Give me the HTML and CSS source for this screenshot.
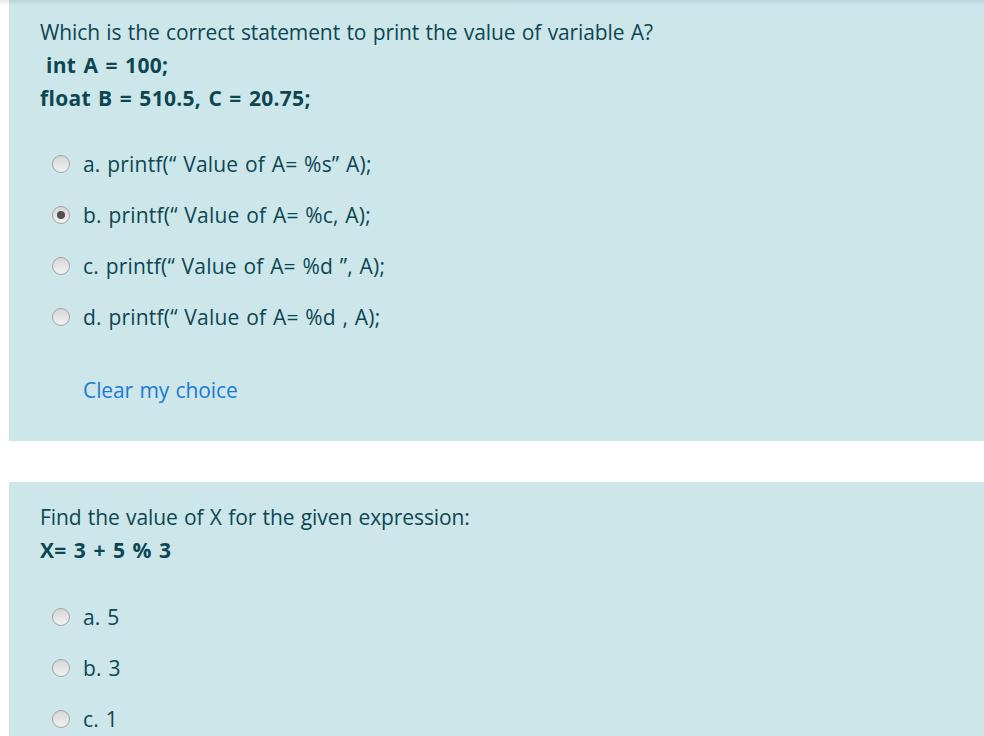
FILE: index.html
```html
<!DOCTYPE html>
<html>
<head>
<meta charset="utf-8">
<link rel="stylesheet" href="styles.css">
</head>
<body>
<div class="topshade"></div>
<section class="card card-first">
  <div class="qtext">
    <p class="line">Which is the correct statement to print the value of variable A?</p>
    <p class="line code"><span class="lead"></span>int A = 100;</p>
    <p class="line code">float B = 510.5, C = 20.75;</p>
  </div>
  <div class="answers">
    <label class="opt"><span class="radio"></span><span class="otext">a. printf(“ Value of A= %s” A);</span></label>
    <label class="opt"><span class="radio checked"></span><span class="otext">b. printf(“ Value of A= %c, A);</span></label>
    <label class="opt"><span class="radio"></span><span class="otext">c. printf(“ Value of A= %d ”, A);</span></label>
    <label class="opt"><span class="radio"></span><span class="otext">d. printf(“ Value of A= %d , A);</span></label>
  </div>
  <a class="clear">Clear my choice</a>
</section>
<section class="card card-second">
  <div class="qtext">
    <p class="line">Find the value of X for the given expression:</p>
    <p class="line code">X= 3 + 5 % 3</p>
  </div>
  <div class="answers">
    <label class="opt"><span class="radio"></span><span class="otext">a. 5</span></label>
    <label class="opt"><span class="radio"></span><span class="otext">b. 3</span></label>
    <label class="opt"><span class="radio"></span><span class="otext">c. 1</span></label>
  </div>
</section>
</body>
</html>
```
FILE: styles.css
```css
html, body {
  margin: 0;
  padding: 0;
  background: #ffffff;
}
body {
  font-family: "Open Sans", "Noto Sans", sans-serif;
  font-size: 21px;
  letter-spacing: -0.1px;
  word-spacing: 1px;
  color: #0c4653;
  overflow: hidden;
  height: 736px;
}
.topshade {
  position: fixed;
  top: 0;
  left: 0;
  right: 0;
  height: 5px;
  background: linear-gradient(to bottom, rgba(0, 40, 50, 0.10), rgba(0, 40, 50, 0));
  pointer-events: none;
}
.card {
  margin-left: 9px;
  background: #cde6ea;
  padding-left: 31px;
  display: flex;
  flex-direction: column;
}
.card-first {
  padding-top: 16px;
  padding-bottom: 34px;
}
.card-second {
  margin-top: 41px;
  padding-top: 19px;
  padding-bottom: 20px;
}
.qtext {
  display: flex;
  flex-direction: column;
}
.line {
  margin: 0;
  height: 33px;
  line-height: 33px;
}
.code {
  font-weight: 700;
  letter-spacing: 0.3px;
  word-spacing: 1.5px;
}
.lead {
  display: inline-block;
  width: 6px;
}
.card-second .code {
  height: 32px;
  line-height: 32px;
}
.answers {
  display: flex;
  flex-direction: column;
  margin-top: 23px;
}
.card-second .answers {
  margin-top: 25px;
}
.opt {
  display: flex;
  align-items: center;
  height: 51px;
  padding-left: 12px;
}
.otext {
  letter-spacing: 0.2px;
}
.radio {
  box-sizing: border-box;
  width: 18px;
  height: 18px;
  border-radius: 50%;
  border: 1px solid #a3a3a3;
  background: linear-gradient(to bottom, #d6d6d6, #f2f2f2);
  margin-right: 13px;
  display: flex;
  align-items: center;
  justify-content: center;
  flex: none;
}
.radio.checked::after {
  content: "";
  width: 8px;
  height: 8px;
  border-radius: 50%;
  background: #505050;
}
.clear {
  display: block;
  margin-top: 32px;
  margin-left: 43px;
  height: 33px;
  line-height: 33px;
  color: #1a7bd2;
  cursor: pointer;
}
```
